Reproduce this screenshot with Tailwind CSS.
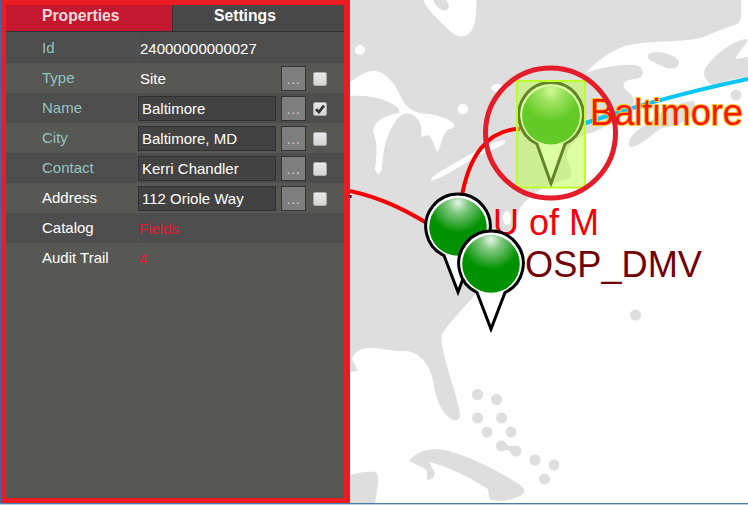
<!DOCTYPE html>
<html lang="en">
<head>
<meta charset="utf-8">
<title>Site properties</title>
<script src="https://cdn.jsdelivr.net/npm/@tailwindcss/browser@4"></script>
</head>
<body class="w-[748px] h-[505px] overflow-hidden bg-white font-['Liberation_Sans',Arial,sans-serif]">
<div class="flex flex-col w-[748px] h-[505px]">
<div class="flex h-[503px]">
  <aside class="w-[350px] shrink-0 border-l border-[#4668a8]">
    <div class="h-[503px] border-[5px] border-r-[6px] border-[#ed1c24] bg-[#575754] text-[15px] leading-[18px] text-white">
      <div class="flex h-[27px] border-b border-[#303030] bg-[#484848] text-[16px] font-bold leading-[21px]">
        <div class="w-[167px] border-r border-[#333] bg-[#c4182e] pl-9 text-[#f3dada]"><span class="inline-block origin-left scale-x-[.98]">Properties</span></div>
        <div class="pl-[41px]"><span class="inline-block origin-left scale-x-[.98]">Settings</span></div>
      </div>
      <div id="rows"></div>
    </div>
  </aside>
  <main class="w-[398px] h-[503px] overflow-hidden">
    <svg class="block" width="398" height="503" viewBox="350 0 398 503">
      <defs>
        <radialGradient id="shine" cx=".5" cy=".08" r=".52"><stop offset="0" stop-color="#fff" stop-opacity=".9"/><stop offset=".35" stop-color="#fff" stop-opacity=".5"/><stop offset="1" stop-color="#fff" stop-opacity="0"/></radialGradient>
        <g id="pin">
          <path d="M-14 28.500A32.300 32.300 0 1 1 14 28.500L0 65Z" fill="#fff" stroke="#000" stroke-width="3"/>
          <circle r="28.800" fill="#009100"/><circle r="28.800" fill="url(#shine)"/>
        </g>
      </defs>
      <g fill="#dedede">
        <path d="M350 0H741V16Q741 23 735 25C723 28 710 35 700 38C680 43 645 40 625 46C610 51 594 63 586 73C600 68 618 64 635 65C646 67 645 78 635 79C625 80 620 84 626 90C638 99 636 106 623 114C611 121 600 132 586 134C573 140 563 150 568 163C576 176 570 180 560 181C540 187 527 198 520 208C515 220 511 240 500 261C489 284 455 314 442 334C441 340 442 345 443 350C448 374 456 392 460 413C461 419 457 421 453 420C441 414 436 398 434 386C432 365 419 352 406 351C391 352 380 347 367 348C358 349 350 357 353 361L358 371L350 372Z"/>
        <path d="M648 55C653 49 673 53 679 61C680 70 669 70 662 66C656 63 646 60 648 55ZM745 39C734 41 717 52 706 67C701 74 706 81 713 86L730 80L748 77V57L735 59C738 53 743 48 747 42Q748 39 745 39ZM694 101C684 101 678 105 668 109C658 115 648 123 638 130C629 136 626 147 632 147C643 144 650 136 660 129C668 126 680 126 688 118C694 113 696 106 694 101Z"/>
        <path d="M409 461C418 449 435 447 449 451C478 459 504 475 519 484C527 490 525 493 520 496C508 502 491 502 489 498L488 489C472 479 448 466 429 462L435 473Q434 480 427 480V471C424 467 414 464 409 461ZM350 475C360 472 369 471 375 472C380 474 378 486 375 503H350Z"/>
        <circle cx="736" cy="95" r="5.500"/><circle cx="635.500" cy="315" r="5.500"/>
        <circle cx="477.500" cy="394.500" r="5.500"/><circle cx="496.500" cy="399.500" r="5.500"/><circle cx="477.500" cy="418" r="5.500"/><circle cx="501.500" cy="418" r="5.500"/><circle cx="487" cy="432" r="5.500"/><circle cx="511" cy="432" r="5.500"/><circle cx="501.500" cy="446" r="5.500"/><circle cx="516" cy="451" r="5.500"/><path d="M502 442L509 446L516 446V455L508 450L501 450Z"/><circle cx="535" cy="460" r="5.500"/><circle cx="554" cy="465" r="5.500"/><circle cx="544.500" cy="479" r="5.500"/>
      </g>
      <g fill="#fff">
        <path fill-rule="evenodd" d="M423.500 0C426 9 439 20 451 32Q461 40 469 34C477 26 476 12 476.500 0ZM433 0C435 6 442 12 447 10Q451 6 446 0Z"/>
        <circle cx="360" cy="50" r="5"/><circle cx="463" cy="109" r="5.200"/>
        <path d="M350 82C359 76 366 70 376 71C390 74 397 88 403 101C408 110 418 114 430 114C440 116 450 119 454 124Q455 129 449 129C442 133 441 147 438 152C434 148 434 139 428 135L421 137C423 127 420 120 414 116C407 111 400 114 395 122C384 139 383 155 382 168Q379 179 375 169C378 147 376 139 373 132C374 119 388 115 399 113Q401 109 394 105C383 98 367 95 350 96Z"/>
        <path d="M431 181C430 176 445 169 462 159C480 149 496 140 505 140C508 145 493 149 480 155C464 163 445 177 431 181Z"/>
        <ellipse cx="498" cy="88" rx="7" ry="4"/><ellipse cx="507" cy="218" rx="4" ry="7"/>
      </g>
      <g fill="none" stroke-width="4">
        <path d="M350 191C381 198 404 209 430 225" stroke="#f50009"/>
        <path d="M461 201C468 157 487 129 520 129" stroke="#f50000"/>
        <path d="M583 124Q658 98 748 79" stroke="#08c5f8"/>
      </g>
      <path d="M350 195h1.500v3h-1.500z"/>
      <use href="#pin" x="458" y="227"/>
      <text x="493" y="235" font-size="36.500" fill="#f5000a" textLength="106" lengthAdjust="spacingAndGlyphs">U of M</text>
      <use href="#pin" x="491" y="264"/>
      <text x="525" y="277" font-size="36.500" fill="#700005" textLength="177" lengthAdjust="spacingAndGlyphs">OSP_DMV</text>
      <g transform="translate(551 115.500)">
        <path d="M-14 28.500A32.300 32.300 0 1 1 14 28.500L0 68Z" fill="#fff" stroke="#000" stroke-width="3"/>
        <circle r="29" fill="#009100"/><circle r="29" fill="url(#shine)"/>
      </g>
      <rect x="517" y="81" width="68" height="106.500" fill="#bfff4a" fill-opacity=".52" stroke="#baff26" stroke-width="2"/>
      <text x="590" y="125" font-size="36" fill="#f9150b" stroke="#ffca28" stroke-width="2" paint-order="stroke" textLength="153" lengthAdjust="spacingAndGlyphs">Baltimore</text>
      <circle cx="550.500" cy="133" r="65" fill="none" stroke="#e51c29" stroke-width="5"/>
    </svg>
  </main>
</div>
<div class="h-[2px] border-t border-[#477fac] bg-[#b9cee0]"></div>
</div>
<script>
const rows = [
  ['Id', '24000000000027', 'plain'], ['Type', 'Site', 'tools'], ['Name', 'Baltimore', 'input'],
  ['City', 'Baltimore, MD', 'input'], ['Contact', 'Kerri Chandler', 'input'], ['Address', '112 Oriole Way', 'input'],
  ['Catalog', 'Fields', 'link'], ['Audit Trail', '4', 'link']
];
document.getElementById('rows').innerHTML = rows.map(([label, value, kind], i) => {
  const teal = i < 5 ? 'text-[#91c5c0]' : 'text-white';
  const shade = i % 2 ? 'bg-[#575754]' : 'bg-[#4d4d4d]';
  const height = i === 0 ? 'h-[31px]' : 'h-[30px]';
  const field = kind === 'input'
    ? `<div class="mt-[3px] w-[138px] h-[25px] border border-[#303030] bg-[#424242] pl-[3px] leading-[24px] whitespace-nowrap">${value}</div>`
    : `<div class="w-[138px] pl-[2px] ${i === 0 ? 'pt-[8px]' : 'pt-[7px]'} ${kind === 'link' ? 'text-[#e81b35]' : ''}">${kind === 'link' ? `<span class="-ml-px">${value}</span>` : value}</div>`;
  const tools = kind === 'input' || kind === 'tools'
    ? `<div class="ml-[5px] mt-[3px] w-[25px] h-[25px] border border-[#333] bg-[#7e7e7e] text-center text-[15px] leading-[23px] tracking-[.5px] text-[#ccc]">...</div>
       <div class="ml-[7px] mt-[9px] w-[14px] h-[14px] rounded-[2px] border border-[#aaa] bg-linear-to-b from-[#eaeaea] to-[#d4d4d4]">${i === 2 ? '<svg class="block" width="12" height="12" viewBox="0 0 12 12"><path d="M2 6.200L5 9L10 2.500" fill="none" stroke="#333" stroke-width="2.800"/></svg>' : ''}</div>` : '';
  return `<div class="flex ${height} ${shade}"><div class="w-[97px] shrink-0 pl-9 ${i === 0 ? 'pt-[7px]' : 'pt-[6px]'} whitespace-nowrap ${teal}">${label}</div><div class="w-[35px] shrink-0 border-r ${i % 2 ? 'border-transparent' : 'border-[#555]'}"></div><div class="flex shrink-0">${field}${tools}</div></div>`;
}).join('');
</script>
</body>
</html>
